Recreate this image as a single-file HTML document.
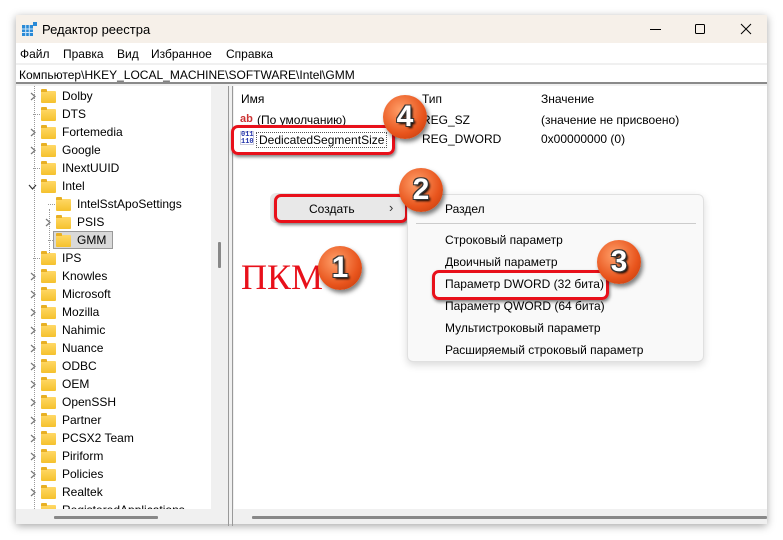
<!DOCTYPE html><html><head><meta charset="utf-8"><style>
*{margin:0;padding:0;box-sizing:border-box}
body{width:783px;height:540px;background:#fff;font-family:"Liberation Sans","Noto Sans CJK SC",sans-serif;font-size:12px;color:#000;position:relative;overflow:hidden}
.win{position:absolute;left:16px;top:15px;width:751px;height:509px;background:#f0f0f0;box-shadow:0 2px 8px rgba(0,0,0,.35)}
.a{position:absolute;white-space:nowrap}
.tree{position:absolute;left:0;top:71px;width:195px;height:423px;background:#fff;overflow:hidden}
.row{position:absolute;height:18px;line-height:18px}
.fd{position:absolute;width:15px;height:12px;background:linear-gradient(#ffd866,#f5c12d);border-radius:1px;top:3px}
.fd:before{content:"";position:absolute;left:0;top:-2px;width:6px;height:3px;background:#e8b024;border-radius:1px 1px 0 0}
.dot{position:absolute;border-left:1px dotted #999}
.hd{position:absolute;border-top:1px dotted #999;width:7px}
.badge{position:absolute;width:44px;height:44px;border-radius:50%;background:radial-gradient(circle at 40% 35%,#ffa06a,#e8541c 60%,#b8360a);box-shadow:2px 3px 4px rgba(0,0,0,.5);color:#fff;font:bold 30px "Liberation Sans",sans-serif;text-align:center;line-height:44px;text-shadow:-1px -1px 0 #333,1px -1px 0 #333,-1px 1px 0 #333,1px 1px 0 #333,2px 2px 2px #000}
.rb{position:absolute;border:3px solid #e8101a;border-radius:7px;box-shadow:1px 2px 3px rgba(0,0,0,.5)}
.mi{position:absolute;left:37px;font-size:12px}
</style></head><body>
<div class="win">
 <div class="a" style="left:0;top:0;width:751px;height:28px;background:#f6f0e9"></div>
 <svg class="a" style="left:6px;top:7px" width="16" height="15"><rect x="0" y="3" width="11" height="11" fill="#2a8ad6"/><path d="M0 7h11M0 10.5h11M3.7 3v11M7.3 3v11" stroke="#cfe6f8" stroke-width="1"/><rect x="11" y="0" width="4" height="4" fill="#2a8ad6"/></svg>
 <div class="a" style="left:26px;top:7px;font-size:13px">Редактор реестра</div>
 <svg class="a" style="left:630px;top:6px" width="110" height="16"><path d="M4 8.5h11" stroke="#000"/><rect x="49.5" y="3.5" width="9" height="9" rx="1" fill="none" stroke="#000"/><path d="M95 3l10 10M105 3l-10 10" stroke="#000"/></svg>
 <div class="a" style="left:0;top:28px;width:751px;height:20px;background:#fff"></div>
 <div class="a" style="left:4px;top:32px">Файл</div><div class="a" style="left:47px;top:32px">Правка</div><div class="a" style="left:101px;top:32px">Вид</div><div class="a" style="left:135px;top:32px">Избранное</div><div class="a" style="left:210px;top:32px">Справка</div>
 <div class="a" style="left:0;top:50px;width:751px;height:19px;background:#fff;border-bottom:2px solid #8a8a8a"></div>
 <div class="a" style="left:3px;top:53px">Компьютер\HKEY_LOCAL_MACHINE\SOFTWARE\Intel\GMM</div>
 <div class="tree">
  <div class="dot" style="left:18px;top:0;height:423px"></div>
  <div class="dot" style="left:33px;top:123px;height:44px"></div>
 </div>
 <div class="a" style="left:202px;top:227px;width:3px;height:26px;background:#888;border-radius:1px"></div>
 <div class="a" style="left:212px;top:71px;width:1px;height:440px;background:#999"></div>
 <div class="a" style="left:218px;top:71px;width:533px;height:423px;background:#fff"></div>
 <div class="a" style="left:216px;top:71px;width:1px;height:440px;background:#999"></div>
 <div class="a" style="left:38px;top:501px;width:104px;height:3px;background:#888;border-radius:1px"></div>
 <div class="a" style="left:236px;top:501px;width:515px;height:3px;background:#888;border-radius:1px"></div>
 <div class="a" style="left:225px;top:77px">Имя</div><div class="a" style="left:406px;top:77px">Тип</div><div class="a" style="left:525px;top:77px">Значение</div>
 <div class="a" style="left:224px;top:98px;color:#c33;font-weight:bold;font-size:11px">ab</div>
 <div class="a" style="left:241px;top:98px">(По умолчанию)</div><div class="a" style="left:406px;top:98px">REG_SZ</div><div class="a" style="left:525px;top:98px">(значение не присвоено)</div>
 <div class="a" style="left:224px;top:116px;width:14px;height:14px;color:#23a;font:bold 7px 'Liberation Mono',monospace;line-height:7px;border:1px solid #ccd">011<br>110</div>
 <div class="a" style="left:240px;top:117px;border:1px dotted #555;padding:0 2px">DedicatedSegmentSize</div><div class="a" style="left:406px;top:117px">REG_DWORD</div><div class="a" style="left:525px;top:117px">0x00000000 (0)</div>
</div>
<div class="rb" style="left:231px;top:125px;width:164px;height:30px"></div>
<div class="a" style="left:270px;top:193px;width:142px;height:30px;background:#e8e8e8;border-radius:6px"></div>
<div class="a" style="left:309px;top:202px">Создать</div><div class="a" style="left:389px;top:200px;font-size:13px;color:#333">›</div>
<div class="rb" style="left:274px;top:194px;width:134px;height:29px"></div>
<div class="a" style="left:407px;top:194px;width:297px;height:168px;background:#f9f9f9;border:1px solid #e0e0e0;border-radius:6px;box-shadow:0 3px 8px rgba(0,0,0,.15)">
 <div class="mi" style="top:7px">Раздел</div>
 <div class="a" style="left:8px;top:28px;width:280px;border-top:1px solid #ccc"></div>
 <div class="mi" style="top:38px">Строковый параметр</div>
 <div class="mi" style="top:60px">Двоичный параметр</div>
 <div class="mi" style="top:82px">Параметр DWORD (32 бита)</div>
 <div class="mi" style="top:104px">Параметр QWORD (64 бита)</div>
 <div class="mi" style="top:126px">Мультистроковый параметр</div>
 <div class="mi" style="top:148px">Расширяемый строковый параметр</div>
</div>
<div class="rb" style="left:432px;top:270px;width:177px;height:30px"></div>
<div class="a" style="left:241px;top:256px;color:#e8101a;font:36px 'Liberation Serif',serif">ПКМ</div>
<div class="badge" style="left:318px;top:246px">1</div>
<div class="badge" style="left:399px;top:168px">2</div>
<div class="badge" style="left:597px;top:240px">3</div>
<div class="badge" style="left:383px;top:95px">4</div>
<script>
var items=[["Dolby",1],["DTS",0],["Fortemedia",1],["Google",1],["INextUUID",0],["Intel",2],["IntelSstApoSettings",0,1],["PSIS",1,1],["GMM",0,1,1],["IPS",0],["Knowles",1],["Microsoft",1],["Mozilla",1],["Nahimic",1],["Nuance",1],["ODBC",1],["OEM",1],["OpenSSH",1],["Partner",1],["PCSX2 Team",1],["Piriform",1],["Policies",1],["Realtek",1],["RegisteredApplications",0]];
var h="";items.forEach(function(it,i){var y=87+i*18;var x=it[2]?56:41;var tx=x+21;
if(it[1]==1)h+='<svg class="a" style="left:'+(x-11)+'px;top:'+(y+5)+'px" width="6" height="9"><path d="M1 1l4 3.5L1 8" fill="none" stroke="#777" stroke-width="1.2"/></svg>';
else if(it[1]==2)h+='<svg class="a" style="left:'+(x-13)+'px;top:'+(y+7)+'px" width="9" height="6"><path d="M1 1l3.5 4L8 1" fill="none" stroke="#333" stroke-width="1.2"/></svg>';
else h+='<div class="hd" style="left:'+(x-8)+'px;top:'+(y+9)+'px"></div>';
if(it[3])h+='<div class="a" style="left:'+(x-3)+'px;top:'+y+'px;width:60px;height:18px;background:#d9d9d9;border:1px solid #999"></div>';
h+='<div class="fd" style="left:'+x+'px;top:'+(y+4)+'px"></div><div class="row" style="left:'+tx+'px;top:'+y+'px">'+it[0]+'</div>';});
var c=document.createElement('div');c.style.cssText='position:absolute;left:0;top:0;width:227px;height:509px;overflow:hidden';c.innerHTML=h;document.body.appendChild(c);
</script>
</body></html>
